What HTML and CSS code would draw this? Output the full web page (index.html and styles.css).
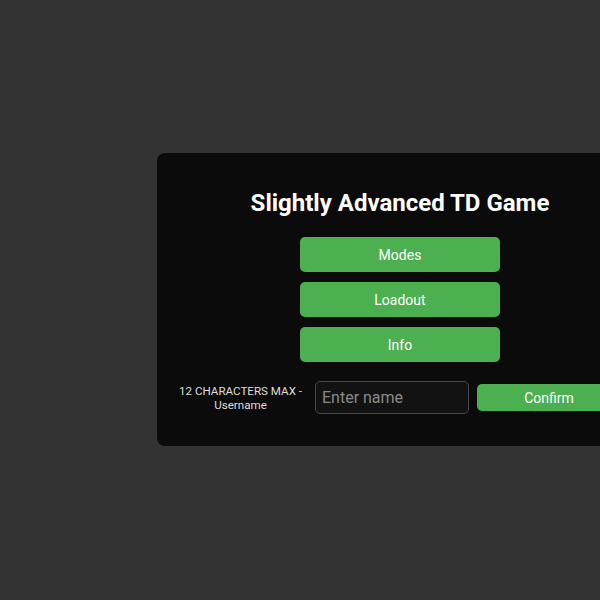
FILE: index.html
```html
<!DOCTYPE html>
<html lang="en">
<head>
    <meta charset="UTF-8">
    <meta name="viewport" content="width=device-width, initial-scale=1.0">
    <title>Slightly Advanced TD Game</title>
    <link rel="stylesheet" href="styles.css">
</head>
<body>
    <div class="menu">
        <h1>Slightly Advanced TD Game</h1>

        <button class="btn menu-btn">Modes</button>
        <button class="btn menu-btn">Loadout</button>
        <button class="btn menu-btn">Info</button>

        <div class="name-row">
            <label for="username" class="name-label">12 CHARACTERS MAX -<br>Username</label>
            <input type="text" id="username" maxlength="12" placeholder="Enter name">
            <button class="btn confirm-btn">Confirm</button>
        </div>
    </div>
</body>
</html>
```

FILE: styles.css
```css
body {
    font-family: Roboto, "Liberation Sans", sans-serif;
    margin: 0;
    height: 100vh;
    overflow: hidden;
    background-color: #333333;
    display: flex;
    align-items: center;
}
.menu {
    flex-shrink: 0;
    width: 486px;
    margin: 0 0 1px 157px;
    padding: 36px 0 32px;
    box-sizing: border-box;
    background: #0b0b0b;
    border-radius: 8px;
    display: flex;
    flex-direction: column;
    align-items: center;
}
h1 {
    color: #ffffff;
    font-size: 24px;
    font-weight: bold;
    line-height: 28px;
    margin: 0 0 20px;
}
.btn {
    background: #4caf50;
    color: white;
    border: none;
    border-radius: 5px;
    cursor: pointer;
    font-family: inherit;
    font-size: 14px;
}
.menu-btn {
    width: 200px;
    height: 35px;
    margin-bottom: 10px;
}
.menu-btn:last-of-type {
    margin-bottom: 0;
}
.name-row {
    display: flex;
    align-items: center;
    gap: 8px;
    margin-top: 19px;
}
.name-label {
    color: #dddddd;
    font-size: 11.6px;
    line-height: 14px;
    text-align: center;
    margin-right: 5px;
}
#username {
    width: 154px;
    height: 33px;
    box-sizing: border-box;
    padding: 0 6px;
    background: #121212;
    border: 1px solid #4a4a4a;
    border-radius: 5px;
    color: #ffffff;
    font-family: inherit;
    font-size: 16px;
}
#username::placeholder {
    color: #8a8a8a;
}
.confirm-btn {
    width: 144px;
    height: 27px;
}
```
